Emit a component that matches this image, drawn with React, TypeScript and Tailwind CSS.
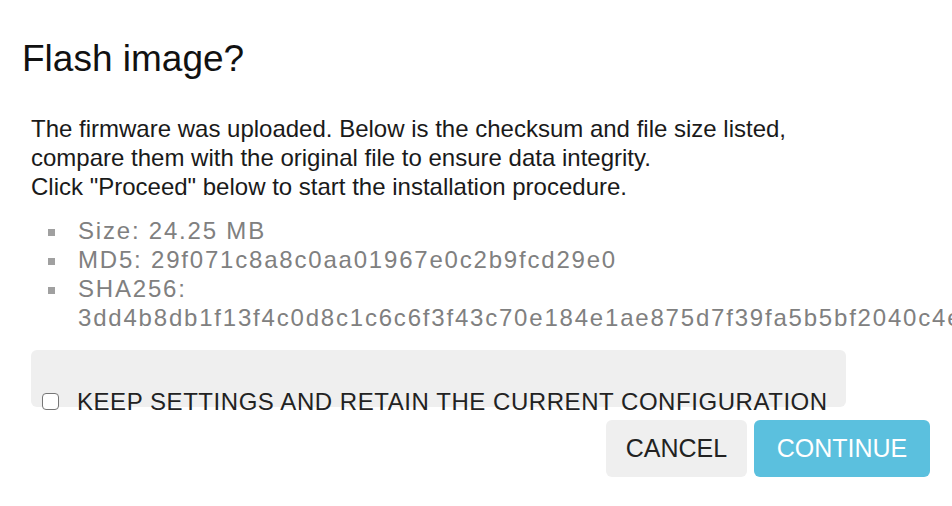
import React from 'react';

export default function App() {
  const details = [
    { label: 'Size:', value: '24.25 MB' },
    { label: 'MD5:', value: '29f071c8a8c0aa01967e0c2b9fcd29e0' },
    {
      label: 'SHA256:',
      value: '3dd4b8db1f13f4c0d8c1c6c6f3f43c70e184e1ae875d7f39fa5b5bf2040c4e21',
    },
  ];

  return (
    <div className="w-full h-[506px] bg-white overflow-hidden font-['Liberation_Sans',Arial,sans-serif]">
      <h2 className="pl-[22px] pt-[38px] text-[37px] leading-[42px] text-[#111]">Flash image?</h2>

      <div className="pl-[31px] pt-[34px] text-[24px] leading-[29px] text-[#1a1a1a]">
        <p>
          The firmware was uploaded. Below is the checksum and file size listed,
          <br />
          compare them with the original file to ensure data integrity.
          <br />
          Click "Proceed" below to start the installation procedure.
        </p>
      </div>

      {/* checksum list */}
      <ul className="mt-[15px] pl-[48px] text-[24px] leading-[29px] tracking-[1.8px] text-[#808080]">
        {details.map((item) => (
          <li key={item.label} className="flex items-start">
            <span className="mt-[13px] w-[7px] h-[7px] shrink-0 bg-[#a0a0a0]" />
            <span className="ml-[23px] w-[780px] whitespace-normal">
              {item.label} {item.value}
            </span>
          </li>
        ))}
      </ul>

      <div className="mt-[18px] ml-[31px] w-[815px] h-[57px] rounded-[6px] bg-[#efefef]" />
      <label className="-mt-[20px] ml-[42px] flex items-center h-[29px] text-[24px] leading-[29px] tracking-[0.55px] text-[#222]">
        <input
          type="checkbox"
          className="appearance-none w-[17px] h-[17px] border border-[#767676] rounded-[4px] bg-white"
        />
        <span className="ml-[18px]">KEEP SETTINGS AND RETAIN THE CURRENT CONFIGURATION</span>
      </label>

      <div className="mt-[4px] pr-[22px] flex justify-end gap-[7px]">
        <button className="w-[141px] h-[57px] rounded-[6px] bg-[#efefef] text-[25px] text-[#222]">
          CANCEL
        </button>
        <button className="w-[176px] h-[57px] rounded-[6px] bg-[#5bc0de] text-[25px] text-white">
          CONTINUE
        </button>
      </div>
    </div>
  );
}
